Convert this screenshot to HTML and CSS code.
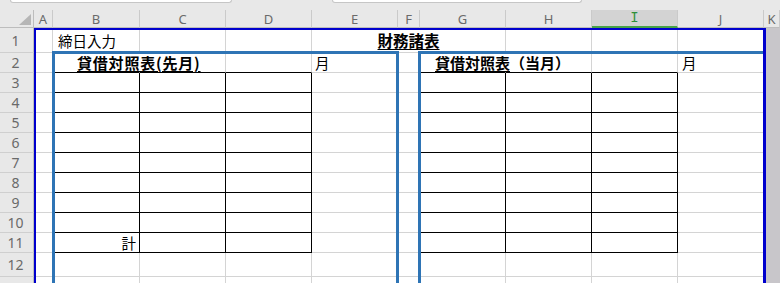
FILE: index.html
```html
<!DOCTYPE html>
<html lang="ja">
<head>
<meta charset="UTF-8" />
<title>財務諸表</title>
<link rel="stylesheet" href="styles.css">
</head>
<body>

<div class="sheet">
  <!-- formula bar edge -->
  <div class="strip">
    <div class="namebox"></div>
    <div class="fxbox"></div>
  </div>

  <!-- column headers -->
  <div class="ch corner"><div class="tri"></div></div>
  <div class="ch">A</div><div class="ch">B</div><div class="ch">C</div><div class="ch">D</div><div class="ch">E</div>
  <div class="ch">F</div><div class="ch">G</div><div class="ch">H</div><div class="ch sel"><span>I</span></div><div class="ch">J</div><div class="ch">K</div>

  <!-- row 1 -->
  <div class="rh">1</div>
  <div class="c"></div><div class="c pl-b1">締日入力</div><div class="c"></div><div class="c"></div><div class="c nr"></div>
  <div class="c nr mid"><span class="head">財務諸表</span></div><div class="c"></div><div class="c"></div><div class="c"></div><div class="c"></div><div class="k"></div>

  <!-- row 2 -->
  <div class="rh">2</div>
  <div class="c"></div><div class="c nr tt pl-b2"><span class="title">貸借対照表(先月)</span></div><div class="c tt"></div><div class="c tt"></div><div class="c pl-e2">月</div>
  <div class="c"></div><div class="c nr tt pl-g2"><span class="title-b"><span class="u">貸借対照表</span>（当月）</span></div><div class="c tt"></div><div class="c tt"></div><div class="c pl-j2">月</div><div class="k"></div>

  <!-- rows 3 to 11 -->
  <div class="rh">3</div>
  <div class="c"></div><div class="c t"></div><div class="c t"></div><div class="c t"></div><div class="c"></div>
  <div class="c"></div><div class="c t"></div><div class="c t"></div><div class="c t"></div><div class="c"></div><div class="k"></div>

  <div class="rh">4</div>
  <div class="c"></div><div class="c t"></div><div class="c t"></div><div class="c t"></div><div class="c"></div>
  <div class="c"></div><div class="c t"></div><div class="c t"></div><div class="c t"></div><div class="c"></div><div class="k"></div>

  <div class="rh">5</div>
  <div class="c"></div><div class="c t"></div><div class="c t"></div><div class="c t"></div><div class="c"></div>
  <div class="c"></div><div class="c t"></div><div class="c t"></div><div class="c t"></div><div class="c"></div><div class="k"></div>

  <div class="rh">6</div>
  <div class="c"></div><div class="c t"></div><div class="c t"></div><div class="c t"></div><div class="c"></div>
  <div class="c"></div><div class="c t"></div><div class="c t"></div><div class="c t"></div><div class="c"></div><div class="k"></div>

  <div class="rh">7</div>
  <div class="c"></div><div class="c t"></div><div class="c t"></div><div class="c t"></div><div class="c"></div>
  <div class="c"></div><div class="c t"></div><div class="c t"></div><div class="c t"></div><div class="c"></div><div class="k"></div>

  <div class="rh">8</div>
  <div class="c"></div><div class="c t"></div><div class="c t"></div><div class="c t"></div><div class="c"></div>
  <div class="c"></div><div class="c t"></div><div class="c t"></div><div class="c t"></div><div class="c"></div><div class="k"></div>

  <div class="rh">9</div>
  <div class="c"></div><div class="c t"></div><div class="c t"></div><div class="c t"></div><div class="c"></div>
  <div class="c"></div><div class="c t"></div><div class="c t"></div><div class="c t"></div><div class="c"></div><div class="k"></div>

  <div class="rh">10</div>
  <div class="c"></div><div class="c t"></div><div class="c t"></div><div class="c t"></div><div class="c"></div>
  <div class="c"></div><div class="c t"></div><div class="c t"></div><div class="c t"></div><div class="c"></div><div class="k"></div>

  <div class="rh">11</div>
  <div class="c"></div><div class="c t right">計</div><div class="c t"></div><div class="c t"></div><div class="c"></div>
  <div class="c"></div><div class="c t"></div><div class="c t"></div><div class="c t"></div><div class="c"></div><div class="k"></div>

  <!-- row 12, then the top sliver of the next row -->
  <div class="rh">12</div>
  <div class="c"></div><div class="c"></div><div class="c"></div><div class="c"></div><div class="c"></div>
  <div class="c"></div><div class="c"></div><div class="c"></div><div class="c"></div><div class="c"></div><div class="k"></div>

  <div class="rh"></div>
  <div class="c"></div><div class="c"></div><div class="c"></div><div class="c"></div><div class="c"></div>
  <div class="c"></div><div class="c"></div><div class="c"></div><div class="c"></div><div class="c"></div><div class="k"></div>

  <!-- thick borders drawn over the cells -->
  <div class="box box-left"></div>
  <div class="box box-right"></div>
  <div class="frame"></div>
</div>

</body>
</html>
```

FILE: styles.css
```css
body {
  margin: 0;
  background: #fff;
  overflow: hidden;
}

.sheet {
  position: relative;
  width: 780px;
  height: 283px;
  overflow: hidden;
  display: grid;
  grid-template-columns: 34px 19px 87px 86px 86px 86px 22px 86px 86px 86px 86px 16px;
  grid-template-rows: 10px 18px 25px repeat(10, 20px) 24px 20px;
  background: #fff;
  font-family: "Noto Sans CJK JP", "Noto Sans", sans-serif;
  font-size: 14.5px;
  color: #000;
}

/* formula bar bottom edge */
.strip {
  grid-column: 1 / -1;
  background: #e8e8e8;
  display: flex;
  gap: 100px;
  padding-left: 10px;
  align-items: flex-start;
}

.namebox,
.fxbox {
  height: 2px;
  background: #fff;
  border: 1px solid #c6c6c6;
  border-top: none;
  border-radius: 0 0 3px 3px;
}

.namebox { width: 220px; }
.fxbox { width: 248px; }

/* headers */
.ch {
  box-sizing: border-box;
  background: #e8e8e8;
  border-right: 1px solid #cacaca;
  border-bottom: 1px solid #bdbdbd;
  display: flex;
  justify-content: center;
  align-items: center;
  font-family: "Noto Sans", sans-serif;
  font-size: 13px;
  color: #6a6a6a;
}

.ch.sel {
  background: #d3d3d3;
  border-bottom: 2px solid #48a248;
  color: #2f8f3a;
}

.ch.sel span {
  font-family: "Liberation Mono", monospace;
  font-size: 14px;
}

.corner {
  justify-content: flex-end;
  align-items: flex-end;
  padding: 0 2px 2px 0;
  border-right-color: #bdbdbd;
}

.tri {
  width: 12px;
  height: 11px;
  background: #b6b6b6;
  clip-path: polygon(100% 0, 100% 100%, 0 100%);
}

.rh {
  box-sizing: border-box;
  background: #e8e8e8;
  border-right: 1px solid #bdbdbd;
  border-bottom: 1px solid #cfcfcf;
  display: flex;
  justify-content: center;
  align-items: center;
  padding-right: 2px;
  font-family: "Noto Sans", sans-serif;
  font-size: 14px;
  color: #6a6a6a;
}

/* cells */
.c {
  box-sizing: border-box;
  border-right: 1px solid #d4d4d4;
  border-bottom: 1px solid #d4d4d4;
  display: flex;
  align-items: center;
  white-space: nowrap;
  min-width: 0;
}

.k {
  background: #c8c6ca;
}

.nr { border-right-color: transparent; }
.tt { border-bottom-color: #000; }
.t { border-right-color: #000; border-bottom-color: #000; }

.mid { justify-content: center; }
.right { justify-content: flex-end; padding-right: 3px; }

.pl-b1 { padding-left: 5px; }
.pl-b2 { padding-left: 24px; }
.pl-e2 { padding-left: 3px; }
.pl-g2 { padding-left: 15px; }
.pl-j2 { padding-left: 4px; }

.head {
  font-weight: 700;
  font-size: 15.5px;
  text-decoration: underline;
  text-underline-offset: 2px;
}

.title {
  font-weight: 700;
  font-size: 15px;
  letter-spacing: 0.8px;
  text-decoration: underline;
  text-underline-offset: 2px;
}

.title-b {
  font-weight: 700;
  font-size: 15px;
}

.u {
  text-decoration: underline;
  text-underline-offset: 2px;
}

/* thick borders over the grid */
.box {
  position: absolute;
  grid-row: 4 / -1;
  top: -2px;
  bottom: -30px;
  border: 3px solid #2e74b5;
  border-bottom: none;
}

.box-left {
  grid-column: 3 / 7;
  left: -1px;
  right: -1px;
}

.box-right {
  grid-column: 8 / 12;
  left: -2px;
  right: -2px;
}

.frame {
  position: absolute;
  grid-column: 2 / 12;
  grid-row: 3 / -1;
  top: 0;
  left: 0;
  right: -2px;
  bottom: -30px;
  border-top: 2px solid #0000cd;
  border-left: 2px solid #0000cd;
  border-right: 3px solid #0000cd;
}
```
